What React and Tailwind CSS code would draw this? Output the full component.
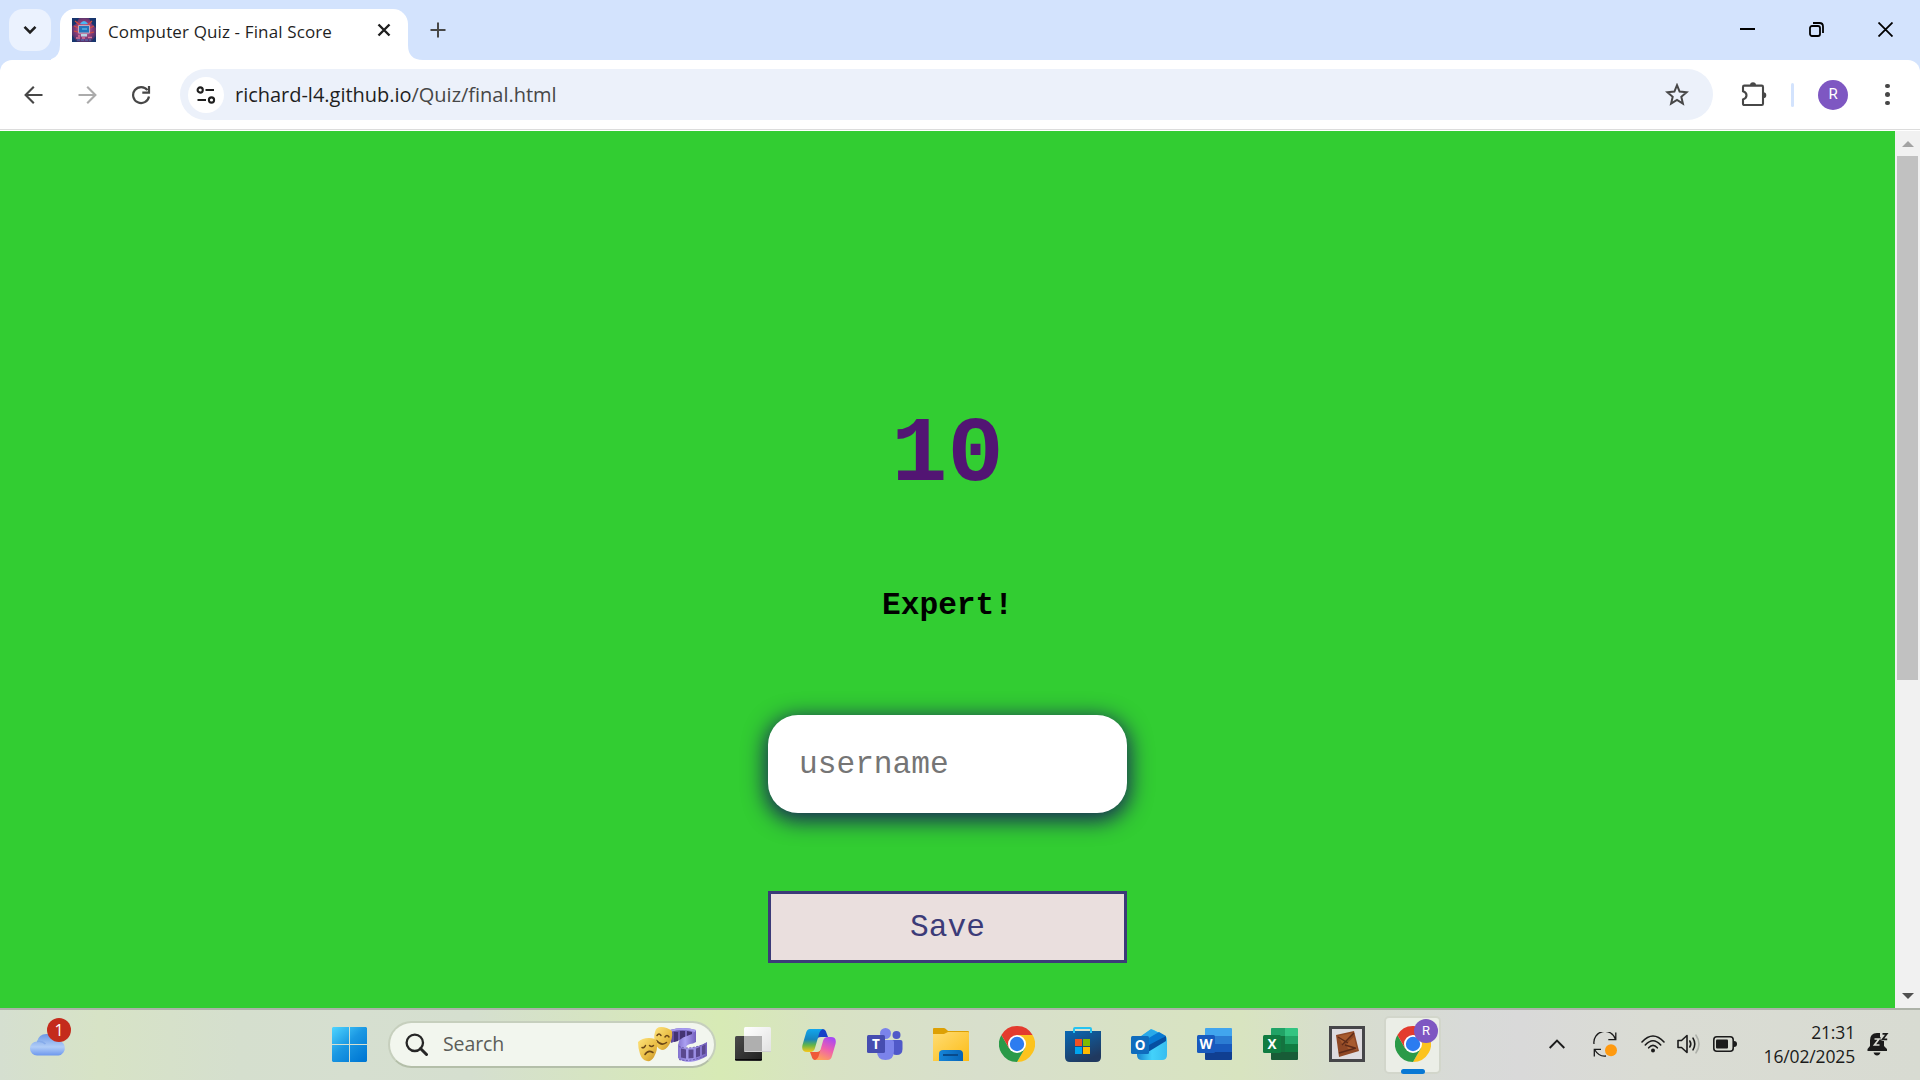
const UI = "font-['Open_Sans','Noto_Sans',sans-serif]";
const MONO = "font-['Courier_New','Liberation_Mono',monospace]";

function Favicon() {
  return (
    <svg width="24" height="24" viewBox="0 0 24 24">
      <defs>
        <radialGradient id="fav" cx=".5" cy=".48" r=".7">
          <stop offset="0" stopColor="#d78fb0" />
          <stop offset=".5" stopColor="#8a3c78" />
          <stop offset="1" stopColor="#142a5e" />
        </radialGradient>
      </defs>
      <rect width="24" height="24" fill="url(#fav)" />
      <path d="M0 0h7L4 6 0 8zM24 0h-7l3 6 4 4zM0 24v-7l5 7zM24 24v-6l-5 6z" fill="#17356d" />
      <path d="M2 8l5 2M2 13l4 1M22 8l-4 2M22 14l-4 1M3 3l5 4M20 3l-4 4" stroke="#d34f3f" strokeWidth="1.2" />
      <path d="M8 6q4-6 8 0z" fill="#48b8f4" />
      <rect x="6" y="7" width="12" height="8.500" rx="1" fill="#c9a2b8" />
      <rect x="7" y="8" width="10" height="6.500" fill="#2475bc" />
      <path d="M10 10h5v2h-5z" fill="#46a1dc" />
      <path d="M9 16h6v2.500H9z" fill="#b9d6e4" />
      <path d="M4 20h4M10 20h3M16 19.500h4M6 18h2" stroke="#d87398" strokeWidth="1.400" />
      <path d="M5 22h14" stroke="#4a78c4" strokeWidth="1.200" strokeDasharray="3 1" />
    </svg>
  );
}

function TabStrip() {
  return (
    <div className="flex h-[60px] items-start bg-[#d3e3fd]">
      <div className="ml-[9px] mt-[9px] flex h-[42px] w-[42px] items-center justify-center rounded-[14px] bg-[#ebf2fe]">
        <svg width="16" height="12" viewBox="0 0 16 12" fill="none" stroke="#1f1f1f" strokeWidth="2.6">
          <path d="M2.5 2.8L8 8.3l5.5-5.5" />
        </svg>
      </div>
      <svg className="mt-[45px]" width="9" height="15" viewBox="0 0 9 15">
        <path d="M9 0v15H-6Q9 15 9 0z" fill="#fff" />
      </svg>
      <div className="mt-[9px] flex h-[51px] w-[348px] items-start rounded-t-[15px] bg-white">
        <div className="ml-3 mt-[9px] shrink-0"><Favicon /></div>
        <span className={`${UI} ml-3 mt-[10.500px] w-[269px] shrink-0 whitespace-nowrap text-[17px] leading-6 tracking-[0.130px] text-[#1f1f1f]`}>Computer Quiz - Final Score</span>
        <svg className="mt-[14px] shrink-0" width="14" height="14" viewBox="0 0 14 14" stroke="#1f1f1f" strokeWidth="2.4">
          <path d="M1.5 1.5l11 11M12.5 1.5l-11 11" />
        </svg>
      </div>
      <svg className="mt-[45px]" width="15" height="15" viewBox="0 0 15 15">
        <path d="M0 0v15h15Q0 15 0 0z" fill="#fff" />
      </svg>
      <svg className="ml-[7px] mt-[22px]" width="16" height="16" viewBox="0 0 16 16" stroke="#474747" strokeWidth="2">
        <path d="M8 .5v15M.5 8h15" />
      </svg>
      <div className="ml-auto mr-[27px] mt-[22px] flex items-center gap-[54px]">
        <svg width="15" height="15" viewBox="0 0 15 15" stroke="#000" strokeWidth="2"><path d="M0 7h15" /></svg>
        <svg width="15" height="15" viewBox="0 0 15 15" fill="none" stroke="#000" strokeWidth="1.8">
          <rect x="1" y="4" width="10" height="10" rx="2" />
          <path d="M4 1h6.5Q14 1 14 4.5V11" />
        </svg>
        <svg width="15" height="15" viewBox="0 0 15 15" stroke="#000" strokeWidth="1.8"><path d="M.5.5l14 14M14.500.5l-14 14" /></svg>
      </div>
    </div>
  );
}

function Toolbar() {
  return (
    <div className="bg-[#d3e3fd]">
      <div className="flex h-[69px] items-center rounded-t-[12px] bg-white">
        <svg className="ml-6" width="19" height="18" viewBox="0 0 19 18" fill="none" stroke="#474747" strokeWidth="2.1"><path d="M18.5 9H1.7M9.8.8L1.6 9l8.2 8.2" /></svg>
        <svg className="ml-[35px]" width="19" height="18" viewBox="0 0 19 18" fill="none" stroke="#ababab" strokeWidth="2.1"><path d="M.5 9h16.8M9.2.8L17.4 9l-8.2 8.2" /></svg>
        <svg className="ml-[34px]" width="20" height="20" viewBox="0 0 20 20" fill="none" stroke="#474747" strokeWidth="2.2">
          <path d="M16.5 5.2A8 8 0 1 0 18 11.5" /><path d="M18 1v6.7h-6.7" />
        </svg>
        <div className="ml-[29px] flex h-[51px] w-[1533px] items-center rounded-full bg-[#ecf1fa]">
          <div className="ml-2 flex h-9 w-9 items-center justify-center rounded-full bg-white">
            <svg width="20" height="18" viewBox="0 0 20 18" fill="none" stroke="#1f1f1f" strokeWidth="2.1">
              <circle cx="4.2" cy="4" r="2.6" /><path d="M9.5 4H18M1.5 14H10" /><circle cx="15.5" cy="14" r="2.6" />
            </svg>
          </div>
          <span className={`${UI} ml-[11px] whitespace-nowrap text-[20px] leading-7 tracking-[-0.020px] text-[#1f1f1f]`}>
            richard-l4.github.io<span className="text-[#474747]">/Quiz/final.html</span>
          </span>
          <svg className="ml-auto mr-[24px]" width="24" height="23" viewBox="0 0 24 23" fill="none" stroke="#474747" strokeWidth="2">
            <path d="M12 2.2l2.600 6.400 7 .6-5.300 4.600 1.600 6.800-5.900-3.600-5.900 3.600 1.600-6.800-5.300-4.600 7-.6z" />
          </svg>
        </div>
        <svg className="ml-[28px]" width="26" height="26" viewBox="0 0 26 26">
          <path d="M3.300 3.600h17.400q1.300 0 1.300 1.300v16.800q0 1.300-1.300 1.300H3.300Q2 23 2 21.700v-4.300q3.500-1.100 3.500-4.100T2 9.200V4.900q0-1.300 1.300-1.300z" fill="none" stroke="#474747" strokeWidth="2.100" />
          <path d="M9 3.200a3 3 0 0 1 6 0zM22.300 10.200a3 3 0 0 1 0 6z" fill="#474747" />
        </svg>
        <div className="ml-[24px] h-6 w-[3px] rounded bg-[#d3e3fd]" />
        <div className="ml-[24px] flex h-[30px] w-[30px] items-center justify-center rounded-full bg-[#7e57c2] font-[Roboto,sans-serif] text-[15px] text-white">R</div>
        <div className="ml-[37px] flex flex-col gap-[4px]">
          <i className="h-[4.500px] w-[4.500px] rounded-full bg-[#474747]" />
          <i className="h-[4.500px] w-[4.500px] rounded-full bg-[#474747]" />
          <i className="h-[4.500px] w-[4.500px] rounded-full bg-[#474747]" />
        </div>
      </div>
    </div>
  );
}

function Page() {
  return (
    <main className={`${MONO} flex flex-1 flex-col items-center bg-[#32cd32]`}>
      <h1 className="mt-[271px] text-[93.600px] font-bold leading-[106px] text-[#521573]">10</h1>
      <h2 className="mt-[80px] text-[31.200px] font-bold leading-[36px] text-black">Expert!</h2>
      <input
        className="mt-[91px] h-[98px] w-[359px] rounded-[30px] bg-white px-[31px] text-[31.200px] shadow-[0_5px_21px_3px_#182b55] outline-none placeholder:text-[#757575]"
        placeholder="username"
      />
      <button className="mt-[78px] h-[72px] w-[359px] border-[3px] border-[#3c3b78] bg-[#eadfde] pt-[2px] text-[31.200px] leading-[36px] text-[#3c3b78]">Save</button>
    </main>
  );
}

function Scrollbar() {
  return (
    <div className="flex w-[25px] flex-col items-center bg-[#f1f1f1]">
      <svg className="mt-[10px]" width="12" height="6" viewBox="0 0 12 6"><path d="M6 0l6 6H0z" fill="#a3a3a3" /></svg>
      <div className="mt-[9px] h-[524px] w-[21px] bg-[#c1c1c1]" />
      <svg className="mb-[9px] mt-auto" width="12" height="6" viewBox="0 0 12 6"><path d="M0 0h12L6 6z" fill="#505050" /></svg>
    </div>
  );
}

function Chrome() {
  return (
    <svg width="36" height="36" viewBox="0 0 36 36">
      <path d="M18 18V9h15.590A18 18 0 0 1 18 36l7.790-13.500z" fill="#fcc31e" />
      <path d="M18 18l7.790 4.500L18 36A18 18 0 0 1 2.410 9l7.800 13.500z" fill="#2a9a48" />
      <path d="M18 9H33.590A18 18 0 0 0 2.410 9l7.800 13.500z" fill="#e33b2e" />
      <circle cx="18" cy="18" r="9" fill="#fff" />
      <circle cx="18" cy="18" r="7.200" fill="#2c7cf0" />
    </svg>
  );
}

function Weather() {
  return (
    <div className="relative ml-[30px] w-[36px]">
      <svg width="36" height="36" viewBox="0 0 36 36">
        <defs><linearGradient id="cloud" x2="0" y2="1"><stop stopColor="#6c98e5" /><stop offset=".6" stopColor="#b1cdf7" /><stop offset="1" stopColor="#6d98ee" /></linearGradient></defs>
        <path d="M7 29.500a7 7 0 0 1 0-14A10 10 0 0 1 26 14.500a7.600 7.600 0 0 1 2.500 15z" fill="url(#cloud)" />
        <path d="M7 15.500q5-1 8.500 2.500" stroke="#86abea" strokeWidth="1.500" fill="none" />
      </svg>
      <span className={`${UI} absolute left-[17px] top-[-8px] flex h-6 w-6 items-center justify-center rounded-full bg-[#c42b1c] text-[16px] leading-none text-white`}>1</span>
    </div>
  );
}

function StartLogo() {
  return (
    <svg width="35" height="35" viewBox="0 0 35 35">
      <defs><linearGradient id="win" gradientUnits="userSpaceOnUse" x1="0" y1="0" x2="30" y2="34"><stop stopColor="#4fd5ff" /><stop offset=".5" stopColor="#1b98e3" /><stop offset="1" stopColor="#0078d4" /></linearGradient></defs>
      <path d="M1 0h16v17H0V1zM18 0h16l1 1v16H18zM0 18h17v17H1l-1-1zM18 18h17v16l-1 1H18z" fill="url(#win)" />
    </svg>
  );
}

function SearchArt() {
  return (
    <svg width="71" height="36" viewBox="0 0 71 36">
      <defs>
        <linearGradient id="film" x2="1"><stop stopColor="#5d4a9e" /><stop offset="1" stopColor="#8d7cd6" /></linearGradient>
        <linearGradient id="reel" x2="1"><stop stopColor="#8474cf" /><stop offset=".4" stopColor="#aba0f2" /><stop offset="1" stopColor="#7460bd" /></linearGradient>
        <linearGradient id="mask" x2="1" y2="1"><stop stopColor="#ffe47c" /><stop offset=".6" stopColor="#e9bd45" /><stop offset="1" stopColor="#c8922a" /></linearGradient>
      </defs>
      <path d="M33 4Q46 0 59 4v11q-12-4-25 2z" fill="url(#film)" />
      <path d="M37 6h4v9l-4 1zM43 5h5v8.500l-5 1zM50 5l5 1v8l-5-1z" fill="#443373" />
      <path d="M33 4Q46 0 59 4l-1 2Q46 2 33 6z" fill="#a79af0" />
      <path d="M59 5v11q-3 2-6 2-4 1-4 4l-8-2q0-8 9-10 5-1 9-5z" fill="url(#reel)" />
      <path d="M41 18q4 5 12 4 9-1 17-6v14q-8 5-17 6-8 0-12-4z" fill="url(#reel)" />
      <path d="M44 22.500l5 1v9l-5-1zM51.500 23.500h5v8.500l-5 .5zM59 22.500l4-1.500v9l-4 1.500zM65 20l3.500-1.500v9L65 29z" fill="#5a488f" />
      <path d="M42 20.500q10 4 27-3M42 33.500q11 3 27-4" fill="none" stroke="#6a58b0" strokeWidth="1" strokeDasharray="2 1.500" />
      <path d="M18 6q1-5 6-5 6 0 11 4 1 8-3 14-3 5-7 5-4-1-6-5-3-7-1-13z" fill="url(#mask)" />
      <path d="M20 9.500q2-3 4 0M28 11q2-3 4 0M19.500 14.500q5 6 10 2" fill="none" stroke="#6b4718" strokeWidth="1.500" strokeLinecap="round" />
      <path d="M1 16q4-4 11-4 6 0 8 3 1 9-3 16-3 5-7 4-5-1-7-7-2-6-2-12z" fill="url(#mask)" />
      <path d="M5 21.500q2 1 3.500-2M12.500 19.500q2 2 4 0M8 28.500q3-5 8-2" fill="none" stroke="#6b4718" strokeWidth="1.500" strokeLinecap="round" />
    </svg>
  );
}

function TaskView() {
  return (
    <svg width="36" height="34" viewBox="0 0 36 34">
      <defs>
        <linearGradient id="tv" x2="1" y2="1"><stop stopColor="#4a4a4a" /><stop offset="1" stopColor="#202020" /></linearGradient>
        <linearGradient id="tw" x2="1" y2="1"><stop stopColor="#fff" /><stop offset="1" stopColor="#e2e2e2" /></linearGradient>
      </defs>
      <rect y="9" width="27" height="25" rx="1.500" fill="url(#tv)" /><path d="M0 32.500h27" stroke="#080808" />
      <rect x="9" width="27" height="25" rx="1.500" fill="url(#tw)" />
      <path d="M9 9h18v15H9z" fill="#afafaf" /><path d="M10 24.500h26" stroke="#d1d1d1" />
    </svg>
  );
}

function Copilot() {
  return (
    <svg width="34" height="31" viewBox="0 0 34 31">
      <defs>
        <linearGradient id="cpa" x2="0" y2="1"><stop stopColor="#12a6ee" /><stop offset=".45" stopColor="#1785bd" /><stop offset=".7" stopColor="#63b548" /><stop offset="1" stopColor="#fac719" /></linearGradient>
        <linearGradient id="cpb" x1=".7" x2=".3" y2="1"><stop stopColor="#a749f4" /><stop offset=".5" stopColor="#ee5fae" /><stop offset="1" stopColor="#ffa25b" /></linearGradient>
      </defs>
      <path d="M17 0h3.500q3 0 4 4l1.500 4h-7q-4 0-5 4z" fill="#1741c8" />
      <path d="M16 31h-3q-2.500 0-3.500-4L8 23h7q3 0 5-4z" fill="#f05938" />
      <path d="M8 0h13q-3 1-4 5l-4 14q-1 4-5 4H5q-6 0-4.500-7L4 4Q5 0 8 0z" fill="url(#cpa)" />
      <path d="M26 31H13q3-1 4-5l4-14q1-4 5-4h3q6 0 4.500 7L30 27q-1 4-4 4z" fill="url(#cpb)" />
    </svg>
  );
}

function Teams() {
  return (
    <svg width="36" height="32" viewBox="0 0 36 32">
      <circle cx="29.500" cy="7" r="4" fill="#5059c9" /><path d="M25 12h8.500q2 0 2 2v7q0 6-6 6-5 0-5-6z" fill="#5059c9" />
      <circle cx="18.500" cy="5.500" r="5.500" fill="#7b83eb" /><path d="M11 12h14q2 0 2 2v9q0 9-8.500 9Q10 32 10 23z" fill="#7b83eb" />
      <rect y="7" width="18" height="18" rx="1.500" fill="#464db0" />
      <text x="9" y="20.800" textAnchor="middle" fontFamily="Open Sans" fontWeight="700" fontSize="13.500" fill="#fff">T</text>
    </svg>
  );
}

function Folder() {
  return (
    <svg width="36" height="33" viewBox="0 0 36 33">
      <defs><linearGradient id="fold" x2="1" y2="1"><stop stopColor="#ffdc73" /><stop offset="1" stopColor="#fcbc16" /></linearGradient><linearGradient id="foldb" x2="1"><stop stopColor="#1685d9" /><stop offset="1" stopColor="#0764b7" /></linearGradient></defs>
      <path d="M0 1q0-1 1-1h10q1 0 3 2l1 1h20q1 0 1 1v7H0z" fill="#dda004" />
      <path d="M0 6h11l4-2h20q1 0 1 1v28H0z" fill="url(#fold)" />
      <path d="M6 33v-7q0-4 4-4h16q4 0 4 4v7z" fill="url(#foldb)" /><path d="M10 27h15" stroke="#084a8b" strokeWidth="2" />
    </svg>
  );
}

function Store() {
  return (
    <svg width="36" height="35" viewBox="0 0 36 35">
      <defs><linearGradient id="store" x2=".5" y2="1"><stop stopColor="#0868b4" /><stop offset="1" stopColor="#20395f" /></linearGradient></defs>
      <path d="M0 4h36v26q0 5-5 5H5q-5 0-5-5z" fill="url(#store)" />
      <path d="M10 1h15v3H10z" fill="#d9e1cd" />
      <path d="M9 6V2q0-1 1-1h15q1 0 1 1v4" fill="none" stroke="#25c3f1" strokeWidth="2" />
      <path d="M10 12h7v7h-7z" fill="#f25022" /><path d="M18 12h7v7h-7z" fill="#7fba00" /><path d="M10 20h7v7h-7z" fill="#00a4ef" /><path d="M18 20h7v7h-7z" fill="#ffb900" />
    </svg>
  );
}

function Outlook() {
  return (
    <svg width="36" height="31" viewBox="0 0 36 31">
      <defs><linearGradient id="outl" x2="1"><stop stopColor="#1783cf" /><stop offset=".5" stopColor="#43d2fb" /><stop offset="1" stopColor="#38bdf0" /></linearGradient></defs>
      <path d="M6 10L19 1q2-1 4 0l11 6q2 1 2 3v16q0 5-5 5H11q-5 0-5-5z" fill="url(#outl)" />
      <path d="M6 10L20 0l8 4L12 15z" fill="#29a9e9" /><path d="M11 13L28 3l7 4-20 14z" fill="#0878d2" /><path d="M16 17L35 7v5L17 23z" fill="#064fa2" />
      <rect y="7" width="18" height="18" rx="1.500" fill="#0f6cbd" />
      <text x="9" y="20.500" textAnchor="middle" fontFamily="Open Sans" fontWeight="700" fontSize="13.500" fill="#fff">O</text>
    </svg>
  );
}

function Office({ letter, colors, tile }) {
  return (
    <svg width="36" height="32" viewBox="0 0 36 32">
      <path d="M8 1q0-1 1-1h25q1 0 1 1v7H8z" fill={colors[0]} />
      <path d="M8 8h27v8H8z" fill={colors[1]} /><path d="M8 16h27v8H8z" fill={colors[2]} />
      <path d="M8 24h27v7q0 1-1 1H9q-1 0-1-1z" fill={colors[3]} />
      {letter === "X" && <path d="M9 0h13v8H8V1z" fill="#21a366" />}
      {letter === "X" && <path d="M8 8h14v8H8zM8 16h14v8H8z" fill="#14733f" />}
      <rect y="7" width="18" height="18" rx="1.500" fill={tile} />
      <text x="9" y="20.800" textAnchor="middle" fontFamily="Open Sans" fontWeight="700" fontSize="13.500" fill="#fff">{letter}</text>
    </svg>
  );
}

function BrownApp() {
  return (
    <svg width="36" height="36" viewBox="0 0 36 36">
      <rect x="1.500" y="1.500" width="33" height="33" fill="#dedbdf" stroke="#464649" strokeWidth="3" />
      <path d="M7 9l18-4 5 20-20 6z" fill="#8f4725" />
      <path d="M9 10l14-3-9 12zM17 18l8-7 3 13-9-1z" fill="#a75a2e" />
      <path d="M9 11l10 6M25 7L13 19M10 27l17-5M16 19l10 3" stroke="#5d2a18" strokeWidth="1.400" fill="none" />
    </svg>
  );
}

const apps = [
  ["task-view", <TaskView />],
  ["copilot", <Copilot />],
  ["teams", <Teams />],
  ["files", <Folder />],
  ["chrome", <Chrome />],
  ["store", <Store />],
  ["outlook", <Outlook />],
  ["word", <Office letter="W" colors={["#41a5ee", "#2b7cd3", "#185abd", "#103f91"]} tile="#185abd" />],
  ["excel", <Office letter="X" colors={["#33c481", "#21a366", "#107c41", "#185c37"]} tile="#107c41" />],
  ["album", <BrownApp />],
];

function Tray() {
  return (
    <div className="ml-auto flex h-full items-center text-[#1b1b1b]">
      <svg width="16" height="10" viewBox="0 0 16 10" fill="none" stroke="currentColor" strokeWidth="1.900"><path d="M.7 9L8 1.500 15.300 9" /></svg>
      <svg className="ml-[28px]" width="24" height="25" viewBox="0 0 24 25" fill="none" stroke="currentColor" strokeWidth="1.300">
        <path d="M1 12A11 11 0 0 1 22.500 7.500M22.800.500v7.200h-7.500M8 17.300H1.300V24.500M1.500 17.500Q6 25 13 24" />
        <circle cx="18" cy="18.300" r="6" fill="#ff9a10" stroke="none" />
      </svg>
      <svg className="ml-6" width="24" height="18" viewBox="0 0 24 18" fill="none" stroke="currentColor" strokeWidth="1.600" strokeLinecap="round">
        <path d="M1 7Q12-5 23 7M4.300 10Q12 1.500 19.700 10M7.700 12.800Q12 8 16.300 12.800" /><circle cx="12" cy="15.500" r="2" fill="currentColor" stroke="none" />
      </svg>
      <svg className="ml-3" width="24" height="20" viewBox="0 0 24 20" fill="none" stroke="currentColor" strokeWidth="1.600" strokeLinejoin="round" strokeLinecap="round">
        <path d="M1 6.500h3.500L10 1.500v17l-5.500-5H1zM12.800 7q2 3 0 6M16 4.200q3.500 5.800 0 11.600" /><path d="M19 1.200q6 8.800 0 17.600" stroke="#adb0a9" />
      </svg>
      <svg className="ml-3" width="24" height="16" viewBox="0 0 24 16">
        <rect x=".8" y=".8" width="19.400" height="14.400" rx="3" fill="none" stroke="currentColor" strokeWidth="1.600" /><rect x="3" y="3.500" width="12" height="9" rx="1" fill="currentColor" /><path d="M21 5q3 0 3 3t-3 3z" fill="currentColor" />
      </svg>
      <div className={`${UI} ml-[24px] flex w-[94px] flex-col items-end whitespace-nowrap text-[17.500px] leading-[24px] tracking-[-0.150px]`}>
        <span>21:31</span><span>16/02/2025</span>
      </div>
      <svg className="ml-[12px] mr-[31px]" width="22" height="24" viewBox="0 0 22 24">
        <path d="M.5 19v-2L3 14V8.500Q3 1 10 1h3v4h4v9l3 3v2zM6.500 20.500h7q-1 3-3.500 3t-3.500-3z" fill="currentColor" />
        <path d="M13.500 0H22v9h-6l-2.500-1z" fill="#dadcd5" />
        <path d="M15.500 1.800h4.300l-4.300 5.600h4.700" fill="none" stroke="currentColor" strokeWidth="1.700" />
        <path d="M7.500 7h4.500l-4.500 6h5" fill="none" stroke="#dadcd5" strokeWidth="1.700" />
      </svg>
    </div>
  );
}

function Taskbar() {
  return (
    <footer className="flex h-[72px] items-center border-t-2 border-[#adb2a8] pb-[2px] bg-[linear-gradient(90deg,#d5dfd0_0px,#d7e3c6_100px,#d5dfce_240px,#d6dfd0_350px,#d5dfcf_470px,#d7eab5_720px,#d8e2c4_830px,#d8dfcc_980px,#d8e4c0_1240px,#d7ddce_1340px,#d8dad8_1470px,#d9d9d9_1520px,#dadcd4_1650px,#d8dbd2_1920px)]">
      <Weather />
      <div className="ml-[266px]"><StartLogo /></div>
      <div className="ml-[21px] flex h-[47px] w-[328px] items-center rounded-full border-2 border-[#c6cfbd] border-b-[#b4bfa9] bg-[#f2f6ee]">
        <svg className="ml-[15px]" width="23" height="23" viewBox="0 0 23 23" fill="none" stroke="#262626" strokeWidth="2.300" strokeLinecap="round"><circle cx="9.800" cy="9.800" r="8.200" /><path d="M15.500 15.500l6 6" strokeWidth="3" /></svg>
        <span className={`${UI} ml-[15px] text-[19.500px] leading-7 tracking-[-0.100px] text-[#5b5d59]`}>Search</span>
        <div className="ml-auto mr-[6px]"><SearchArt /></div>
      </div>
      <div className="ml-[4px] flex items-center">
        {apps.map(([name, icon]) => <div key={name} className="flex w-[66px] justify-center">{icon}</div>)}
        <div className="relative ml-[4px] mt-[2px] flex h-[58px] w-[57px] items-center justify-center rounded-[5px] border-2 border-[#d2d6cb] bg-[#ebeee7] pb-[2px]">
          <Chrome />
          <span className="absolute left-[28px] top-[1px] flex h-6 w-6 items-center justify-center rounded-full bg-[#7e57c2] font-[Roboto,sans-serif] text-[13px] text-white">R</span>
          <i className="absolute bottom-[-2px] left-[15px] h-[5px] w-6 rounded-full bg-[#0878d4]" />
        </div>
      </div>
      <Tray />
    </footer>
  );
}

export default function App() {
  return (
    <div className="flex h-[1080px] w-[1920px] flex-col overflow-hidden">
      <TabStrip />
      <Toolbar />
      <div className="h-[2px] border-t border-[#dcdcdc] bg-white" />
      <div className="flex min-h-0 flex-1">
        <Page />
        <Scrollbar />
      </div>
      <Taskbar />
    </div>
  );
}
